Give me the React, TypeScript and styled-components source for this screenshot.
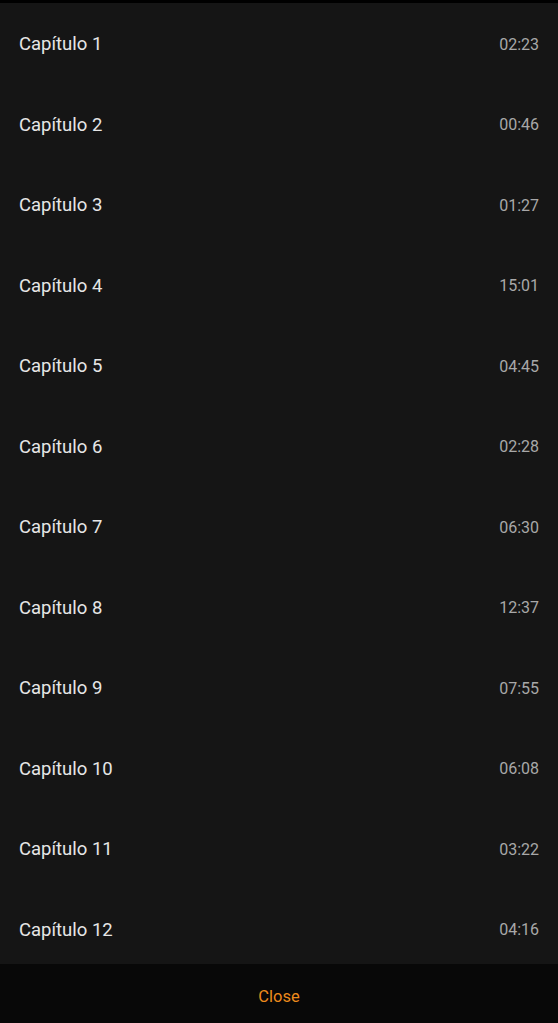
import React from 'react';
import styled, { createGlobalStyle } from 'styled-components';

const GlobalStyle = createGlobalStyle`
  html, body {
    margin: 0;
    padding: 0;
    background: #151515;
  }
  body {
    font-family: Roboto, "Noto Sans", sans-serif;
    -webkit-font-smoothing: antialiased;
  }
`;

const chapters = [
  { title: 'Capítulo 1', duration: '02:23' },
  { title: 'Capítulo 2', duration: '00:46' },
  { title: 'Capítulo 3', duration: '01:27' },
  { title: 'Capítulo 4', duration: '15:01' },
  { title: 'Capítulo 5', duration: '04:45' },
  { title: 'Capítulo 6', duration: '02:28' },
  { title: 'Capítulo 7', duration: '06:30' },
  { title: 'Capítulo 8', duration: '12:37' },
  { title: 'Capítulo 9', duration: '07:55' },
  { title: 'Capítulo 10', duration: '06:08' },
  { title: 'Capítulo 11', duration: '03:22' },
  { title: 'Capítulo 12', duration: '04:16' },
];

const Screen = styled.div`
  display: flex;
  flex-direction: column;
  height: 1023px;
  background: #151515;
  border-top: 3px solid #000;
  box-sizing: border-box;
`;

const List = styled.ul`
  flex: 1;
  margin: 0;
  padding: 1px 0 0;
  list-style: none;
  overflow: hidden;
`;

const Row = styled.li`
  display: flex;
  align-items: center;
  justify-content: space-between;
  height: 80.5px;
  padding: 0 19px;
  box-sizing: border-box;
`;

const Title = styled.span`
  font-size: 18.5px;
  color: #e6e6e6;
`;

const Duration = styled.span`
  font-size: 16px;
  color: #a8a8a8;
`;

const Footer = styled.button`
  flex: none;
  height: 59px;
  border: none;
  background: #080808;
  color: #ec8a1c;
  font-family: Roboto, "Noto Sans", sans-serif;
  font-size: 16.5px;
  padding: 6px 0 0;
  cursor: pointer;
`;

export default function App() {
  return (
    <>
      <GlobalStyle />
      <Screen>
        <List>
          {chapters.map(c => (
            <Row key={c.title}>
              <Title>{c.title}</Title>
              <Duration>{c.duration}</Duration>
            </Row>
          ))}
        </List>
        <Footer>Close</Footer>
      </Screen>
    </>
  );
}
